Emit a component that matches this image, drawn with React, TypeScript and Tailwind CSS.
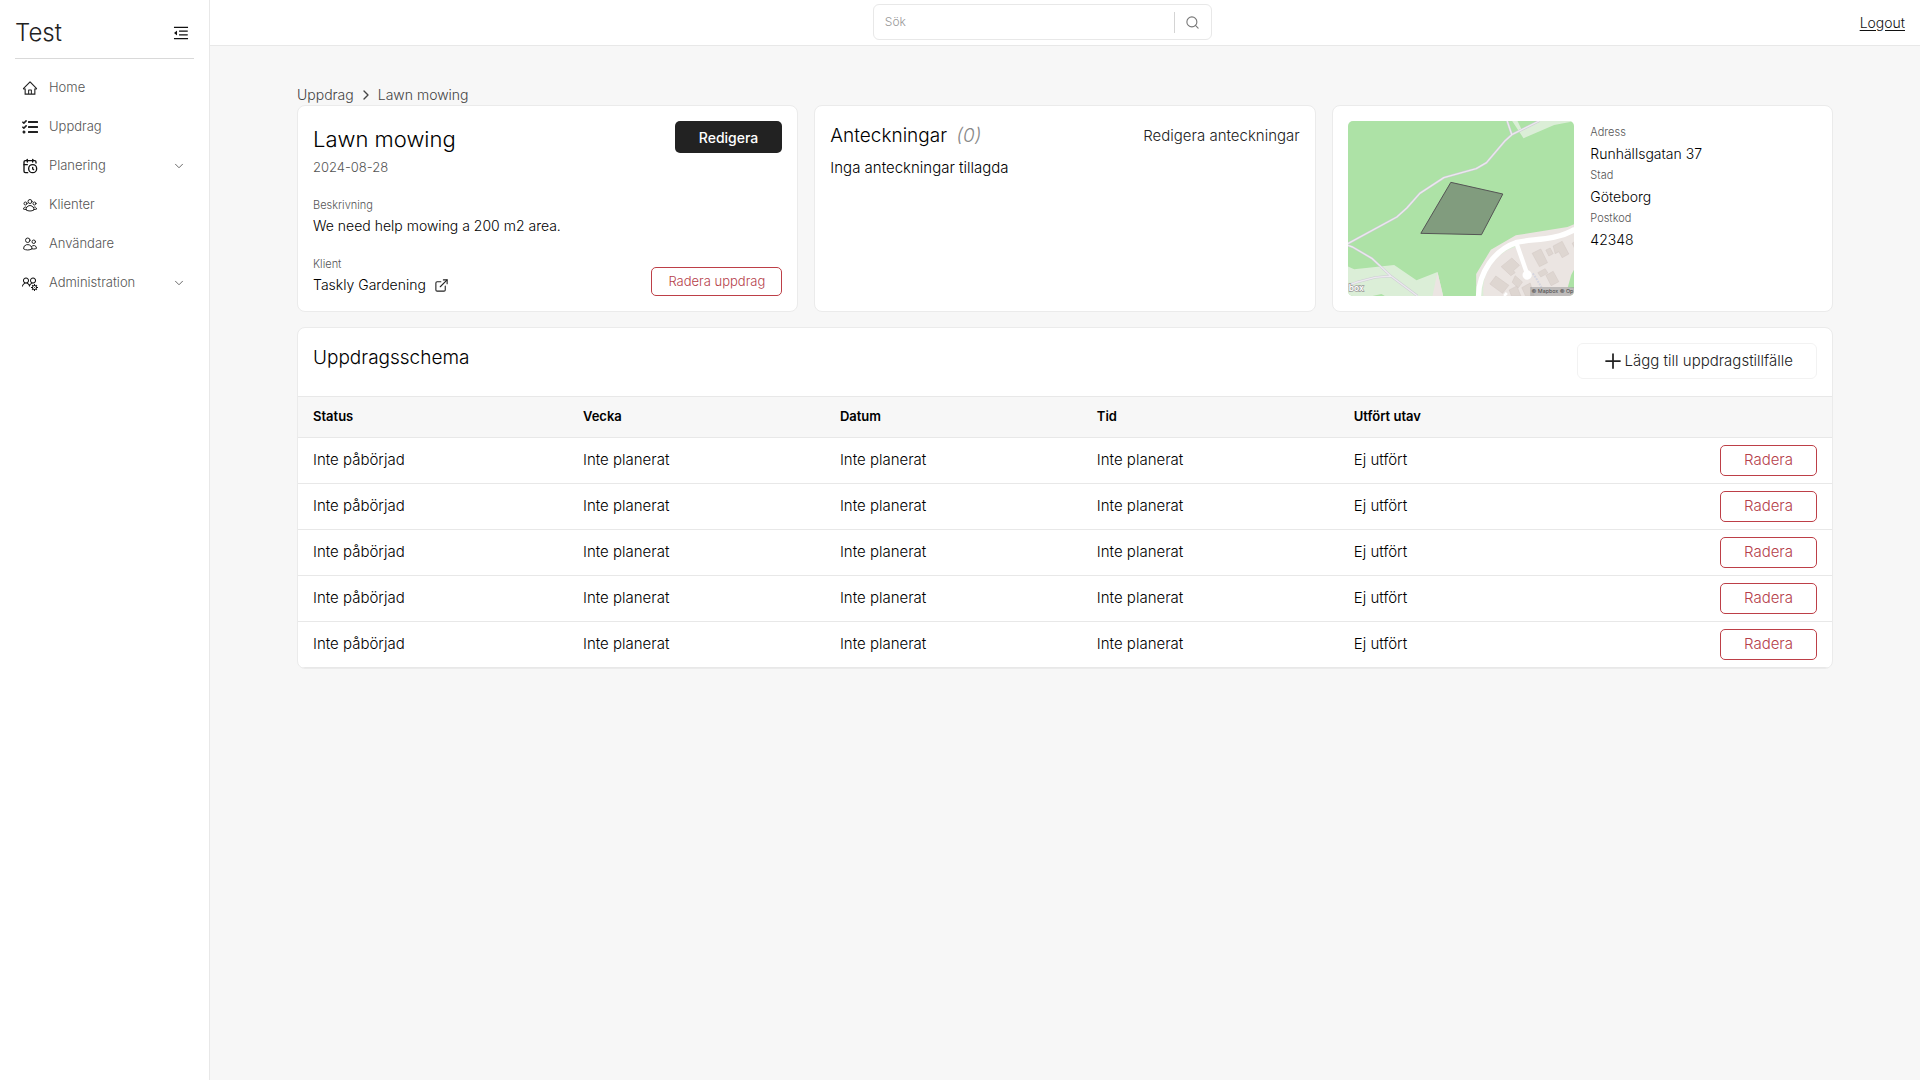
import type { ReactNode } from "react";
import type { IconType } from "react-icons";
import { AiOutlineHome, AiOutlineMenuFold } from "react-icons/ai";
import { FaTasks } from "react-icons/fa";
import { HiOutlineUserGroup, HiOutlineUsers } from "react-icons/hi2";
import { LiaUsersCogSolid } from "react-icons/lia";
import {
  LuCalendarClock,
  LuChevronDown,
  LuChevronRight,
  LuExternalLink,
  LuPlus,
  LuSearch,
} from "react-icons/lu";

type NavItem = { label: string; icon: IconType; expandable?: boolean };

const NAV: NavItem[] = [
  { label: "Home", icon: AiOutlineHome },
  { label: "Uppdrag", icon: FaTasks },
  { label: "Planering", icon: LuCalendarClock, expandable: true },
  { label: "Klienter", icon: HiOutlineUserGroup },
  { label: "Användare", icon: HiOutlineUsers },
  { label: "Administration", icon: LiaUsersCogSolid, expandable: true },
];

const ADDRESS = [
  { label: "Adress", value: "Runhällsgatan 37" },
  { label: "Stad", value: "Göteborg" },
  { label: "Postkod", value: "42348" },
];

const ROWS = [1, 2, 3, 4, 5].map((id) => ({
  id,
  status: "Inte påbörjad",
  week: "Inte planerat",
  date: "Inte planerat",
  time: "Inte planerat",
  doneBy: "Ej utfört",
}));

function Sidebar() {
  return (
    <aside className="w-[210px] shrink-0 border-r border-[#e8e8e8] bg-white px-[15px]">
      <div className="flex h-[59px] items-center justify-between border-b border-[#d9d9d9] pt-2">
        <span className="text-[24px] text-[#222]">Test</span>
        <button type="button" aria-label="Fäll ihop meny" className="mr-1 text-[#111]">
          <AiOutlineMenuFold size={18} />
        </button>
      </div>
      <nav className="mt-[10px] flex flex-col gap-px">
        {NAV.map(({ label, icon: Icon, expandable }) =>
          expandable ? (
            <button
              key={label}
              type="button"
              className="flex h-[38px] items-center gap-[11px] pr-2 pl-[7px] text-left text-[13px] text-[#555]"
            >
              <Icon size={16} className="text-[#111]" />
              <span className="flex-1">{label}</span>
              <LuChevronDown size={14} strokeWidth={1.5} />
            </button>
          ) : (
            <a
              key={label}
              href="#"
              className="flex h-[38px] items-center gap-[11px] pl-[7px] text-[13px] text-[#555]"
            >
              <Icon size={16} className="text-[#222]" />
              {label}
            </a>
          ),
        )}
      </nav>
    </aside>
  );
}

function Header() {
  return (
    <header className="flex h-[46px] items-center border-b border-[#e8e8e8] bg-white px-[15px] pb-px">
      <div className="flex flex-1 justify-center">
        <form className="flex h-9 w-[339px] items-center rounded-md border border-[#e8e8e8]">
          <input
            type="text"
            aria-label="Sök"
            placeholder="Sök"
            className="min-w-0 flex-1 px-[11px] text-[12px] outline-none placeholder:text-[#999]"
          />
          <button
            type="button"
            aria-label="Sök"
            className="flex h-[21px] w-[37px] items-center justify-center border-l border-[#d4d4d4] text-[#777]"
          >
            <LuSearch size={15} strokeWidth={1.75} />
          </button>
        </form>
      </div>
      <a href="#" className="text-[14px] text-[#111] underline underline-offset-2">
        Logout
      </a>
    </header>
  );
}

function Card({ children, className = "" }: { children: ReactNode; className?: string }) {
  return (
    <section className={`rounded-lg border border-[#ebebeb] bg-white ${className}`}>{children}</section>
  );
}

function JobCard() {
  return (
    <Card className="flex justify-between p-[15px]">
      <div>
        <h1 className="text-[22px] leading-9">Lawn mowing</h1>
        <p className="text-[13px] leading-5 text-[#555]">2024-08-28</p>
        <p className="mt-5 text-[11px] leading-4 text-[#555]">Beskrivning</p>
        <p className="mt-[3px] text-[14px] leading-5">We need help mowing a 200 m2 area.</p>
        <p className="mt-5 text-[11px] leading-4 text-[#555]">Klient</p>
        <a href="#" className="mt-[3px] flex items-center gap-2 text-[14px] leading-5">
          Taskly Gardening
          <LuExternalLink size={15} strokeWidth={1.75} className="text-[#222]" />
        </a>
      </div>
      <div className="flex flex-col items-end justify-between">
        <button
          type="button"
          className="h-8 rounded-[5px] bg-[#222] px-6 text-[14px] font-medium text-white"
        >
          Redigera
        </button>
        <button
          type="button"
          className="h-[29px] rounded-[5px] border border-[#bd3f47] px-4 text-[13px] text-[#b5404a]"
        >
          Radera uppdrag
        </button>
      </div>
    </Card>
  );
}

function NotesCard() {
  return (
    <Card className="p-[15px]">
      <div className="flex h-[30px] items-center justify-between">
        <h2 className="text-[19px]">
          Anteckningar <span className="ml-1 text-[#888] italic">(0)</span>
        </h2>
        <button type="button" className="text-[15px] text-[#222]">
          Redigera anteckningar
        </button>
      </div>
      <p className="mt-[7px] text-[15px] leading-5">Inga anteckningar tillagda</p>
    </Card>
  );
}

function MapPreview() {
  return (
    <svg
      viewBox="81 63 681 525"
      preserveAspectRatio="xMidYMid slice"
      role="img"
      aria-label="Karta"
      className="h-full w-full rounded-[5px]"
    >
      <rect x="81" y="63" width="681" height="525" fill="#ade2a6" />
      {/* Light clearings */}
      <path d="M574 63L608 115L700 75L762 63Z" fill="#dbeed7" />
      <path d="M590 63L602 88L655 63Z" fill="#ade2a6" />
      <path d="M81 499L100 508L220 495L287 541L350 516L367 588H81Z" fill="#dbeed7" />
      <path d="M350 516L367 588H335Z" fill="#ebe5e2" />
      <path d="M155 588L182 582L192 588Z" fill="#ade2a6" />
      {/* Residential area */}
      <path d="M466 588V522L510 449L585 406L740 381L762 372V588Z" fill="#ebe5e2" />
      <path d="M488 588C480 520 520 460 586 440L580 434C520 450 478 520 480 588Z" fill="#dbeed7" />
      <path d="M762 505L751 525L741 562L762 565Z" fill="#ade2a6" />
      {/* Footpaths */}
      <g fill="none" strokeLinejoin="round">
        <g stroke="#cccbd3" strokeWidth="7">
          <path d="M81 431L228 351L258 324L297 280L369 233L466 206L497 188L553 122L573 104L655 63M573 104L559 63" />
          <path d="M81 436L95 441L153 475L210 528L290 588M210 528L163 532L110 546L81 556" />
        </g>
        <g stroke="#ece9ef" strokeWidth="4">
          <path d="M81 431L228 351L258 324L297 280L369 233L466 206L497 188L553 122L573 104L655 63M573 104L559 63" />
          <path d="M81 436L95 441L153 475L210 528L290 588M210 528L163 532L110 546L81 556" />
        </g>
        <path d="M636 520L646 535L662 562" stroke="#d4d5df" strokeWidth="6" strokeDasharray="6 3" />
      </g>
      {/* Buildings */}
      <g fill="#ded6d1" stroke="#d2c9c4" strokeWidth="1.5">
        <path d="M541 500L573 474L596 496L578 512L583 518L570 527Z" />
        <path d="M507 552L525 528L564 556L545 580Z" />
        <path d="M583 527L605 546L592 564L574 547Z" />
        <path d="M565 570L588 558L600 588H572Z" />
        <path d="M603 563L628 549L640 588H614Z" />
        <path d="M634 460L660 447L680 488L656 500Z" />
        <path d="M675 450L688 444L697 461L684 468Z" />
        <path d="M697 438L724 424L744 462L724 473L714 455L703 461Z" />
        <path d="M754 430L762 424V446Z" />
        <path d="M651 518L673 506L681 519L660 531Z" />
        <path d="M675 526L697 514L714 545L691 557Z" />
      </g>
      {/* Streets */}
      <g fill="none" stroke="#fff" strokeLinejoin="round">
        <path d="M473 588C474 520 520 450 585 428C630 415 700 425 762 388" strokeWidth="16" />
        <path d="M587 430L619 522" strokeWidth="13" />
        <path d="M550 588L558 579" strokeWidth="8" />
      </g>
      <circle cx="619" cy="525" r="14" fill="#fff" />
      {/* Selected plot */}
      <path d="M390 247L546 282L482 404L300 400Z" fill="#555" fillOpacity="0.5" stroke="#555" strokeWidth="3" />
      <text
        x="84"
        y="574"
        fontSize="25"
        fontWeight="600"
        fill="#fff"
        stroke="#999"
        strokeWidth="4"
        paintOrder="stroke"
      >
        box
      </text>
      <rect x="628" y="561" width="134" height="27" fill="#999" fillOpacity="0.55" />
      <text x="632" y="580" fontSize="16" fontWeight="400" fill="#444">
        © Mapbox © Op
      </text>
    </svg>
  );
}

function AddressCard() {
  return (
    <Card className="grid grid-cols-2 gap-4 p-[15px]">
      <div className="h-[175px]">
        <MapPreview />
      </div>
      <dl className="pt-px">
        {ADDRESS.map(({ label, value }) => (
          <div key={label}>
            <dt className="text-[11px] leading-5 text-[#555]">{label}</dt>
            <dd className="text-[14px] leading-[23px]">{value}</dd>
          </div>
        ))}
      </dl>
    </Card>
  );
}

function ScheduleCard() {
  return (
    <Card className="mt-[15px] overflow-hidden">
      <div className="flex h-[68px] items-start justify-between px-[15px] pt-[15px]">
        <h2 className="text-[19px] leading-[30px]">Uppdragsschema</h2>
        <button
          type="button"
          className="flex h-9 items-center rounded-md border border-[#f2f2f2] px-[23px] text-[15px] text-[#222]"
        >
          <LuPlus size={24} strokeWidth={1.75} />
          Lägg till uppdragstillfälle
        </button>
      </div>
      <table className="w-full table-fixed text-left text-[15px]">
        <thead>
          <tr className="h-[41px] border-y border-[#e8e8e8] bg-[#f7f7f7] text-[13px]">
            <th className="w-[17.6%] pl-[15px] font-semibold">Status</th>
            <th className="w-[16.75%] pl-[15px] font-semibold">Vecka</th>
            <th className="w-[16.75%] pl-[15px] font-semibold">Datum</th>
            <th className="w-[16.75%] pl-[15px] font-semibold">Tid</th>
            <th className="w-[16.75%] pl-[15px] font-semibold">Utfört utav</th>
            <td />
          </tr>
        </thead>
        <tbody>
          {ROWS.map((row) => (
            <tr key={row.id} className="h-[46px] border-b border-[#e8e8e8]">
              <td className="pl-[15px]">{row.status}</td>
              <td className="pl-[15px]">{row.week}</td>
              <td className="pl-[15px]">{row.date}</td>
              <td className="pl-[15px]">{row.time}</td>
              <td className="pl-[15px]">{row.doneBy}</td>
              <td className="pr-[15px] text-right">
                <button
                  type="button"
                  className="h-[31px] rounded-[5px] border border-[#bd3f47] px-[23px] align-middle text-[15px] text-[#b5404a]"
                >
                  Radera
                </button>
              </td>
            </tr>
          ))}
        </tbody>
      </table>
    </Card>
  );
}

export default function App() {
  return (
    <div className="flex min-h-screen bg-[#f7f7f7] font-['Inter',sans-serif] font-light text-black">
      <Sidebar />
      <div className="min-w-0 flex-1">
        <Header />
        <main className="mx-auto max-w-screen-2xl pt-[38px]">
          <nav aria-label="Brödsmulor" className="flex h-[21px] items-center gap-1 text-[14px] text-[#444]">
            <a href="#">Uppdrag</a>
            <LuChevronRight size={16} />
            <span>Lawn mowing</span>
          </nav>
          <div className="grid grid-cols-3 gap-4">
            <JobCard />
            <NotesCard />
            <AddressCard />
          </div>
          <ScheduleCard />
        </main>
      </div>
    </div>
  );
}
